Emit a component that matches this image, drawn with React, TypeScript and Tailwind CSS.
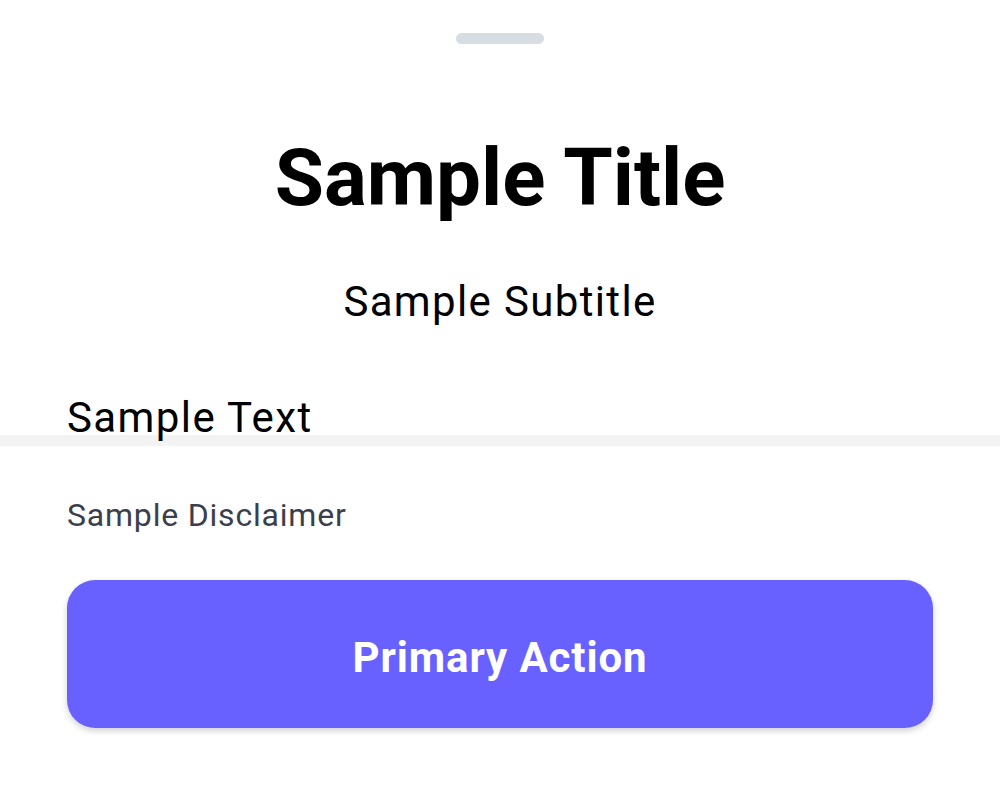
export default function App() {
  return (
    <div className="flex h-[796px] w-[1000px] flex-col bg-white font-['Roboto','Liberation_Sans',sans-serif] text-black">
      <div className="h-[435px] flex-none px-[67px]">
        <div className="mx-auto mt-[33px] h-[11px] w-[88px] rounded-full bg-[#d8dce3]" />
        <h1 className="mt-[94px] text-center text-[80px] font-bold leading-none">Sample Title</h1>
        <p className="mt-[63px] text-center text-[42px] leading-none tracking-[1.35px]">Sample Subtitle</p>
        <p className="relative mt-[74px] text-[42px] leading-none tracking-[1.4px]">Sample Text</p>
      </div>

      <div className="flex flex-1 flex-col border-t-[11px] border-[#f3f3f3] px-[67px]">
        <p className="mt-[53px] text-[32px] leading-none tracking-[0.8px] text-[#3b3f4b]">Sample Disclaimer</p>
        <button
          type="button"
          className="mt-[49px] flex h-[148px] w-full items-center justify-center rounded-[28px] bg-[#6961ff] pt-[7px] text-[42px] font-bold leading-none tracking-[0.9px] text-white shadow-[0_3px_6px_rgba(0,0,0,0.18)]"
        >
          Primary Action
        </button>
      </div>
    </div>
  )
}
